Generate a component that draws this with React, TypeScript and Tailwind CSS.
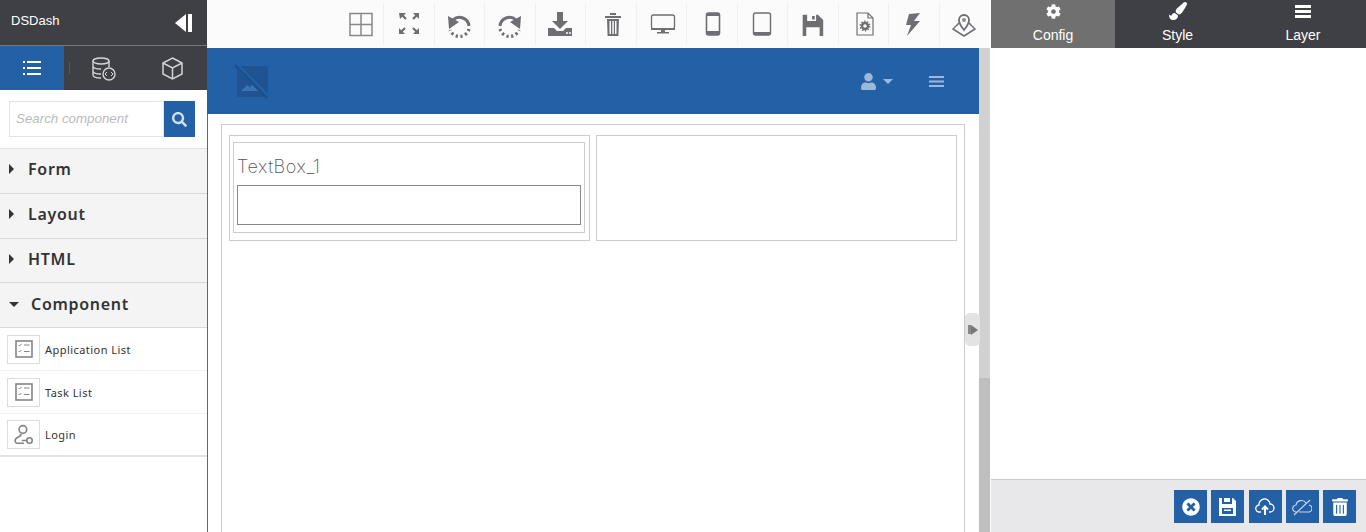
import React from 'react';
import { FaCog, FaPaintBrush, FaSearch, FaTimesCircle, FaTrashAlt, FaUser } from 'react-icons/fa';

const Ico = ({ children, w = 28, h = 28 }: { children: React.ReactNode; w?: number; h?: number }) => (
  <svg width={w} height={h} viewBox="0 0 28 28" fill="none" stroke="#6f6f73" strokeWidth="2">
    {children}
  </svg>
);

const toolbar = [
  // layout grid
  { cls: 'pl-[6px]', icon: <Ico key="grid"><path strokeWidth="1.500" stroke="#888" d="M3 3.500h22v22H3zM14 3.500v22M3 14.500h22" /></Ico> },
  // fullscreen
  { cls: '', icon: (
    <Ico key="full">
      <path stroke="none" fill="#6f6f73" d="M4 3h7l-2.200 2.200 3 3-1.600 1.600-3-3L5 9zM24 3v6l-2.200-2.200-3 3-1.600-1.600 3-3L18 3zM4 24v-6l2.200 2.200 3-3 1.600 1.600-3 3L10 24zM24 24h-6l2.200-2.200-3-3 1.600-1.600 3 3L24 18z" />
    </Ico>
  ) },
  // undo
  { cls: '', icon: (
    <Ico key="undo">
      <path strokeWidth="3" d="M8 10A9.500 9.500 0 0 1 24 16" />
      <path strokeWidth="3.200" strokeDasharray="2.200 2.600" d="M24 19A10 10 0 0 1 5 20" />
      <path stroke="none" fill="#6f6f73" d="M3 6 14 12 4 19z" />
    </Ico>
  ) },
  // redo
  { cls: '', icon: (
    <Ico key="redo">
      <path strokeWidth="3" d="M20 10A9.500 9.500 0 0 0 4 16" />
      <path strokeWidth="3.200" strokeDasharray="2.200 2.600" d="M4 19A10 10 0 0 0 23 20" />
      <path stroke="none" fill="#6f6f73" d="M25 6 14 12 24 19z" />
    </Ico>
  ) },
  // download to tray
  { cls: '', icon: (
    <Ico key="download">
      <path stroke="none" fill="#6f6f73" d="M11 2h6v9h5l-8 8-8-8h5zM2 18h6l3 3h6l3-3h6v8H2z" />
      <circle cx="21" cy="23" r="1" fill="#fff" stroke="none" />
      <circle cx="24" cy="23" r="1" fill="#fff" stroke="none" />
    </Ico>
  ) },
  // trash
  { cls: 'pl-[4px]', icon: (
    <Ico key="trash">
      <path stroke="none" fill="#6f6f73" fillRule="evenodd" d="M6 6h16v2H6zM11 3h6v2h-6zM8 9h12l-.6 17H8.600zM10.500 11v13h1.500V11zM13.300 11v13h1.500V11zM16 11v13h1.500V11z" />
    </Ico>
  ) },
  // desktop
  { cls: 'pl-[3px]', icon: (
    <Ico key="desktop">
      <rect x="2.500" y="5" width="23" height="14" rx="2" strokeWidth="1.300" />
      <path stroke="none" fill="#6f6f73" d="M2 18h24v2H2zM12 20h4v2h4v1.500H8V22h4z" />
    </Ico>
  ) },
  // phone
  { cls: 'pl-[2px]', icon: (
    <Ico key="phone">
      <rect x="7.500" y="3" width="13" height="22" rx="2" strokeWidth="1.600" />
      <path stroke="none" fill="#6f6f73" d="M8 3h12v3H8zM8 21h12v4H8z" />
    </Ico>
  ) },
  // tablet
  { cls: '', icon: (
    <Ico key="tablet">
      <rect x="5.500" y="3" width="17" height="22" rx="2" strokeWidth="1.400" />
      <path stroke="none" fill="#6f6f73" d="M6 22h16v3H6z" />
    </Ico>
  ) },
  // floppy
  { cls: 'pt-[2px]', icon: (
    <Ico key="save" w={25} h={25}>
      <path stroke="none" fill="#6f6f73" fillRule="evenodd" d="M3 3h17l6 6v18H3zM8 3v7h10V3zM13.500 4.500h3v4h-3zM7 17v10h15V17z" />
    </Ico>
  ) },
  // settings file
  { cls: 'pl-[4px]', icon: (
    <Ico key="file">
      <path strokeWidth="1.200" d="M6 3h11l5 5v17H6zM17 3v5h5" />
      <circle cx="14" cy="16" r="3" strokeWidth="2.400" />
      <circle cx="14" cy="16" r="4.800" strokeWidth="1.300" strokeDasharray="1.500 1.500" />
    </Ico>
  ) },
  // bolt
  { cls: 'pr-[2px]', icon: (
    <Ico key="bolt">
      <path stroke="none" fill="#6f6f73" d="M21 3 10 4 7 15h5L8 26 21 11h-6z" />
    </Ico>
  ) },
  // map pin on layer
  { cls: 'pr-[2px]', icon: (
    <Ico key="pin">
      <path strokeWidth="1.500" d="M9 13 3 19l11 7 11-7-6-6" />
      <path strokeWidth="1.800" fill="#fbfbfb" d="M14 20c-3-4-5-6-5-10a5 5 0 0 1 10 0c0 4-2 6-5 10z" />
      <circle cx="14" cy="10" r="2" fill="#8a8a8a" stroke="none" />
    </Ico>
  ) },
];

const ListIco = () => (
  <svg width="18" height="18" viewBox="0 0 18 18" fill="none" stroke="#858585">
    <rect x="1" y="1" width="16" height="16" strokeWidth="1.600" />
    <path strokeWidth="1" d="M3.500 5l1 1 2-2M3.500 11l1 1 2-2M9 5h5.500M9 11.500h5.500" />
  </svg>
);

const LoginIco = () => (
  <svg width="22" height="22" viewBox="0 0 20 20" fill="none" stroke="#858585" strokeWidth="1.500">
    <circle cx="9" cy="5" r="3.500" />
    <path d="M7 9v1.500L3 13c-1.500 1-1.500 4 .5 4.500H10M8 15h5" />
    <circle cx="15" cy="15" r="2.500" />
  </svg>
);

const Row = ({ label, open, size }: { label: string; open?: boolean; size: string }) => (
  <div className={`flex items-center border-b border-[#d9d9d9] bg-[#f4f4f4] pl-[9px] font-['Noto_Sans',sans-serif] text-[16px] font-semibold tracking-[0.7px] text-[#333] ${size}`}>
    {open ? (
      <span className="mr-[12px] h-0 w-0 border-x-[5px] border-t-[5px] border-x-transparent border-t-[#333]" />
    ) : (
      <span className="mr-[14px] h-0 w-0 border-y-[5px] border-l-[5px] border-y-transparent border-l-[#333]" />
    )}
    {label}
  </div>
);

const Item = ({ label, icon, last }: { label: string; icon: React.ReactNode; last?: boolean }) => (
  <div className={`flex items-center gap-[5px] pl-[7px] font-['Noto_Sans',sans-serif] text-[11px] tracking-[0.45px] text-[#333] ${last ? 'h-[43px] border-b-2 border-[#e3e3e3]' : 'h-[43px] border-b border-[#f0f0f0]'}`}>
    <span className="flex h-[29px] w-[33px] items-center justify-center border border-[#dcdcdc]">{icon}</span>
    <span className="pt-[2px]">{label}</span>
  </div>
);

const Tab = ({ label, icon, active, width }: { label: string; icon: React.ReactNode; active?: boolean; width: string }) => (
  <div className={`flex flex-col items-center font-['Liberation_Sans',sans-serif] text-[14px] leading-[18px] text-white ${width} ${active ? 'bg-[#707070]' : ''}`}>
    <span className="flex h-[22px] items-center">{icon}</span>
    <span className="mt-[4px]">{label}</span>
  </div>
);

const FootBtn = ({ children }: { children: React.ReactNode }) => (
  <span className="flex h-[33px] w-[33px] items-center justify-center bg-[#2360a5]">{children}</span>
);

export default function App() {
  return (
    <div className="flex h-[532px] w-[1366px] overflow-hidden bg-white font-['Liberation_Sans',sans-serif]">
      {/* left sidebar */}
      <aside className="w-[207px] shrink-0 bg-white">
        <div className="flex h-[45px] items-center justify-between bg-[#3f4045] pb-[4px] pl-[11px] pr-[15px] text-[13px] text-white">
          DSDash
          <span className="flex items-center gap-[2px] pt-[4px]">
            <span className="h-0 w-0 border-y-[9px] border-r-[11px] border-y-transparent border-r-white" />
            <span className="h-[18px] w-[4px] bg-white" />
          </span>
        </div>
        <div className="flex h-[45px] border-t border-[#777] bg-[#3f4045]">
          <div className="flex w-[64px] items-center justify-center bg-[#2360a5]">
            <svg width="20" height="16" viewBox="0 0 20 16" fill="white">
              <path d="M1 1h2v2H1zM5 1h14v2H5zM1 7h2v2H1zM5 7h14v2H5zM1 13h2v2H1zM5 13h14v2H5z" />
            </svg>
          </div>
          <div className="flex flex-1 items-center pl-[5px] pr-[23px]">
            <span className="h-[12px] w-px bg-[#555]" />
            <svg className="ml-[21px]" width="25" height="25" viewBox="0 0 25 25" fill="none" stroke="#d4d4d6" strokeWidth="1.400">
              <ellipse cx="10" cy="5" rx="8" ry="3" />
              <path d="M2 5v14c0 2 4 3 8 3M18 5v6M2 10c0 2 4 3 8 3M2 15c0 2 4 3 8 3" />
              <circle cx="18" cy="18" r="6" />
              <path d="M16 16l-2 2 2 2M20 16l2 2-2 2" strokeWidth="1" />
            </svg>
            <svg className="ml-auto" width="23" height="25" viewBox="0 0 23 25" fill="none" stroke="#d4d4d6" strokeWidth="1.500">
              <path d="M11.500 2 21 7v11l-9.500 5L2 18V7zM2 7l9.500 5L21 7M11.500 12v11" />
            </svg>
          </div>
        </div>
        <div className="flex h-[58px] items-start pl-[9px] pt-[11px]">
          <div className="flex h-[36px] w-[155px] items-center border border-[#e3e3e3] pl-[6px] text-[13.330px] italic text-[#bbb]">
            Search component
          </div>
          <div className="flex h-[36px] w-[31px] items-center justify-center bg-[#2360a5]">
            <FaSearch size={15} color="#cfe0f2" />
          </div>
        </div>
        <div className="border-t border-[#e3e3e3]">
          <Row label="Form" size="h-[45px] pb-[4px]" />
          <Row label="Layout" size="h-[45px] pb-[4px]" />
          <Row label="HTML" size="h-[44px] pb-[3px]" />
          <Row label="Component" open size="h-[45px] pb-[2px]" />
          <Item label="Application List" icon={<ListIco />} />
          <Item label="Task List" icon={<ListIco />} />
          <Item label="Login" icon={<LoginIco />} last />
        </div>
      </aside>

      {/* centre */}
      <main className="flex min-w-0 flex-1 flex-col">
        <div className="flex h-[48px] shrink-0 items-center justify-end bg-[#fbfbfb] pb-[1px]">
          {toolbar.map((t, i) => (
            <span key={i} className={`flex h-[42px] w-[50.500px] items-center justify-center border-r border-[#f0f0f3] last:border-r-0 ${t.cls}`}>
              {t.icon}
            </span>
          ))}
        </div>
        <div className="flex min-h-0 flex-1">
          <div className="relative flex w-[772px] flex-col">
            <div className="flex h-[66px] shrink-0 items-center bg-[#2360a5] pl-[27px] pr-[35px]">
              <svg width="36" height="36" viewBox="0 0 36 36">
                <rect x="3" y="3" width="31" height="31" rx="2" fill="#1f5391" />
                <path d="M7 28l6-6 3 2 3-3 7 7z" fill="#3a72b2" />
                <path d="M1 1l33 33" stroke="#2360a5" strokeWidth="5" />
                <path d="M1 2l32 33" stroke="#1d4f8c" strokeWidth="2.500" />
              </svg>
              <span className="ml-auto flex items-center">
                <FaUser size={17} color="#9db8d9" />
                <span className="ml-[6px] h-0 w-0 border-x-[5px] border-t-[5px] border-x-transparent border-t-[#9db8d9]" />
              </span>
              <svg className="ml-[36px]" width="15" height="13" viewBox="0 0 15 13" fill="#9db8d9">
                <path d="M0 1h15v2H0zM0 5.500h15v2H0zM0 10h15v2H0z" />
              </svg>
            </div>
            <div className="min-h-0 flex-1 border-l border-[#666] pl-[13px] pr-[14px] pt-[10px]">
              <div className="h-[420px] border border-[#ccc] px-[7px] pt-[10px]">
                <div className="grid grid-cols-2 gap-[6px]">
                  <div className="h-[106px] border border-[#ccc] pb-[7px] pl-[3px] pr-[4px] pt-[6px]">
                    <div className="h-[91px] border border-[#ccc] px-[3px] pt-[14px]">
                      <div className="font-['Inter',sans-serif] text-[18px] font-extralight leading-[20px] tracking-[0.6px] text-[#555]">TextBox_1</div>
                      <div className="mt-[8px] h-[40px] border border-[#888]" />
                    </div>
                  </div>
                  <div className="h-[106px] border border-[#ccc]" />
                </div>
              </div>
            </div>
            {/* collapse handle over the canvas edge */}
            <div className="absolute right-[-1px] top-[265px] flex h-[33px] w-[15px] items-center justify-center rounded-[5px] bg-[#e3e3e3]">
              <span className="h-[9px] w-[3px] bg-[#888]" />
              <span className="h-0 w-0 border-y-[5px] border-l-[7px] border-y-transparent border-l-[#777]" />
            </div>
          </div>
          <div className="flex w-[11px] shrink-0 flex-col bg-[#d1d1d1]">
            <div className="h-[330px]" />
            <div className="flex-1 bg-[#bfbfbf]" />
          </div>
        </div>
      </main>

      {/* right panel */}
      <aside className="flex w-[376px] shrink-0 flex-col pl-[1px]">
        <div className="flex h-[48px] shrink-0 bg-[#3f4045]">
          <Tab label="Config" active width="w-[124px]" icon={<FaCog size={15} color="white" />} />
          <Tab label="Style" width="w-[125px]" icon={<FaPaintBrush size={18} color="white" />} />
          <Tab label="Layer" width="w-[126px]" icon={
            <svg width="16" height="13" viewBox="0 0 16 13" fill="white"><path d="M0 0h16v3H0zM0 5h16v3H0zM0 10h16v3H0z" /></svg>
          } />
        </div>
        <div className="flex-1" />
        <div className="flex h-[53px] shrink-0 items-center justify-end gap-[4.250px] border-t border-[#ccc] bg-[#e8e8ea] pr-[10px] pt-[1px]">
          <FootBtn><FaTimesCircle size={18} color="white" /></FootBtn>
          <FootBtn>
            <svg width="17" height="18" viewBox="0 0 17 18" fill="white" fillRule="evenodd">
              <path d="M0 0h3v6h10V0h1l3 3v15H0zM5 0h6v4H5zM3 10v6h11v-6zM5 11.500h7v1.500H5z" />
            </svg>
          </FootBtn>
          <FootBtn>
            <svg width="20" height="18" viewBox="0 0 20 18" fill="none" stroke="white" strokeWidth="1.300">
              <path d="M6 14H4.500a3.500 3.500 0 0 1-.5-7 5.500 5.500 0 0 1 11-1 4 4 0 0 1 0 8h-1" />
              <path strokeWidth="2" d="M10 17V9M7 11.500 10 8.500l3 3" />
            </svg>
          </FootBtn>
          <FootBtn>
            <svg width="20" height="18" viewBox="0 0 20 18" fill="none" stroke="#c7d6e8" strokeWidth="1.200">
              <path d="M5 14H4.500a3.500 3.500 0 0 1-.5-7 5.500 5.500 0 0 1 10-2M17 7a3.500 3.500 0 0 1-1 7H7M2 17 18 2" />
            </svg>
          </FootBtn>
          <FootBtn><FaTrashAlt size={18} color="white" /></FootBtn>
        </div>
      </aside>
    </div>
  );
}
